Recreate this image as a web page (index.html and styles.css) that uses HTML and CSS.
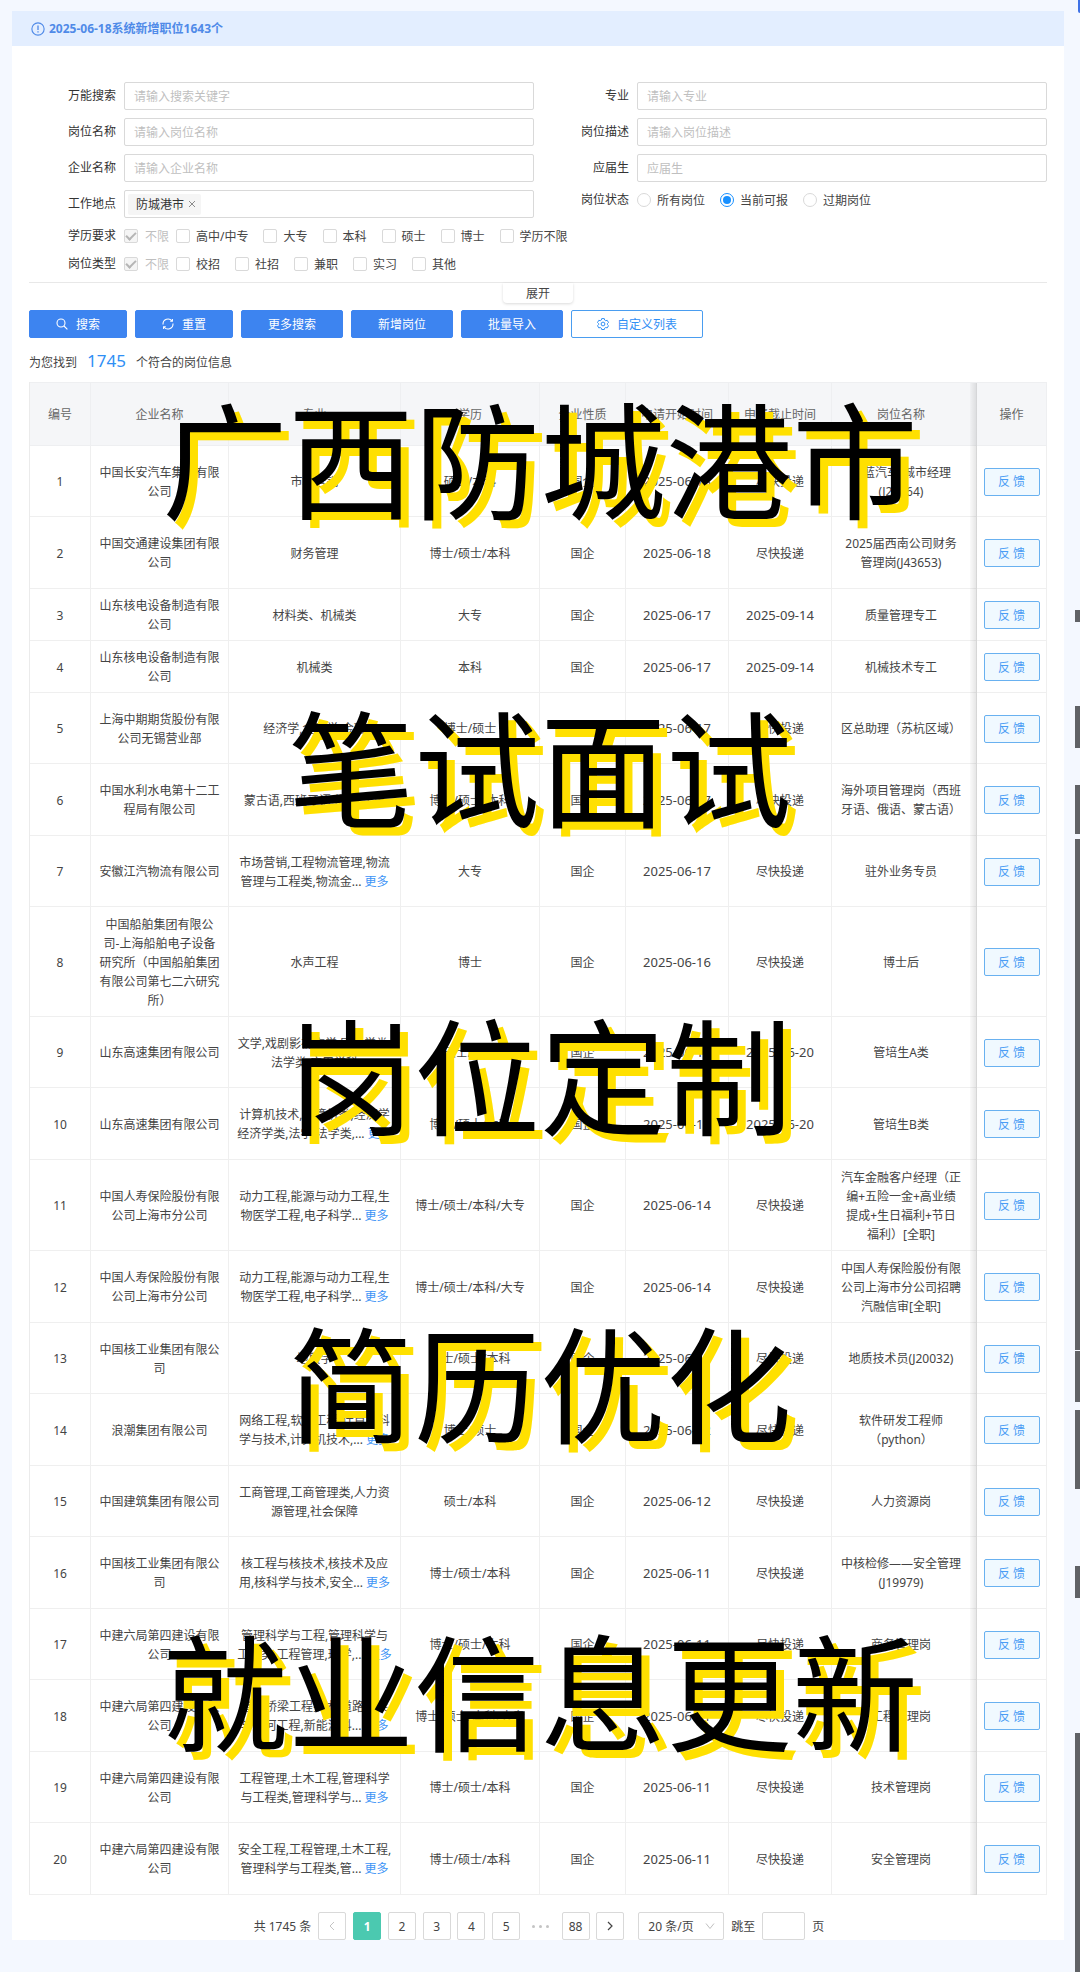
FILE: index.html
```html
<!DOCTYPE html>
<html lang="zh-CN">
<head>
<meta charset="utf-8">
<title>岗位列表</title>
<link rel="stylesheet" href="styles.css">
</head>
<body>
<main class="panel">
  <div class="notice">
    <svg class="notice-icon" viewBox="0 0 16 16" fill="none" stroke="currentColor"><circle cx="8" cy="8" r="7" stroke-width="1.3"/><path d="M8 4v5M8 10.6v1.4" stroke-width="1.5"/></svg>
    <span>2025-06-18系统新增职位1643个</span>
  </div>
  <div class="content">
    <form class="filters">
      <label for="kw">万能搜索</label><input class="field" id="kw" type="text" placeholder="请输入搜索关键字">
      <label for="major">专业</label><input class="field" id="major" type="text" placeholder="请输入专业">
      <label for="job">岗位名称</label><input class="field" id="job" type="text" placeholder="请输入岗位名称">
      <label for="desc">岗位描述</label><input class="field" id="desc" type="text" placeholder="请输入岗位描述">
      <label for="corp">企业名称</label><input class="field" id="corp" type="text" placeholder="请输入企业名称">
      <label for="grad">应届生</label><input class="field" id="grad" type="text" placeholder="应届生">
      <label for="place">工作地点</label>
      <div class="field tags">
        <span class="tag">防城港市<button type="button" class="tag-close" aria-label="移除"><svg viewBox="0 0 8 8" stroke="currentColor"><path d="M1 1l6 6M7 1l-6 6"/></svg></button></span>
        <input class="tag-input" id="place" type="text">
      </div>
      <span class="row-label">岗位状态</span>
      <div class="options status">
        <label><input type="radio" name="st">所有岗位</label>
        <label><input type="radio" name="st" checked>当前可报</label>
        <label><input type="radio" name="st">过期岗位</label>
      </div>
      <span class="row-label">学历要求</span>
      <div class="options wide">
        <label class="off"><input type="checkbox" checked disabled>不限</label>
        <label><input type="checkbox">高中/中专</label>
        <label><input type="checkbox">大专</label>
        <label><input type="checkbox">本科</label>
        <label><input type="checkbox">硕士</label>
        <label><input type="checkbox">博士</label>
        <label><input type="checkbox">学历不限</label>
      </div>
      <span class="row-label">岗位类型</span>
      <div class="options wide">
        <label class="off"><input type="checkbox" checked disabled>不限</label>
        <label><input type="checkbox">校招</label>
        <label><input type="checkbox">社招</label>
        <label><input type="checkbox">兼职</label>
        <label><input type="checkbox">实习</label>
        <label><input type="checkbox">其他</label>
      </div>
    </form>
    <div class="fold"><button type="button" class="fold-btn">展开</button></div>
    <div class="toolbar">
      <button type="button" class="btn narrow"><svg viewBox="0 0 12 12" fill="none" stroke="currentColor" stroke-width="1.1"><circle cx="5" cy="5" r="4"/><path d="M8 8l3.4 3.4"/></svg>搜索</button>
      <button type="button" class="btn narrow"><svg viewBox="0 0 12 12" fill="none" stroke="currentColor" stroke-width="1.1"><path d="M1 6.6V6a5 5 0 0 1 9-3M11 5.4V6a5 5 0 0 1-9 3"/><path d="M10.4 1v2.3H8.2M1.600 11V8.700H3.800"/></svg>重置</button>
      <button type="button" class="btn">更多搜索</button>
      <button type="button" class="btn">新增岗位</button>
      <button type="button" class="btn">批量导入</button>
      <button type="button" class="btn outline"><svg viewBox="0 0 12 12" fill="none" stroke="currentColor"><path d="M4.700.600h2.600l.4 1.500 1 .6 1.500-.4 1.300 2.200-1.100 1.100v1l1.100 1.100-1.300 2.200-1.500-.4-1 .6-.4 1.400H4.700l-.4-1.400-1-.6-1.500.4L.500 7.700l1.100-1.100v-1L.500 4.500l1.300-2.200 1.500.4 1-.6z"/><circle cx="6" cy="6" r="1.900"/></svg>自定义列表</button>
    </div>
    <p class="summary">为您找到<strong>1745</strong>个符合的岗位信息</p>
    <table class="jobs">
      <colgroup><col class="c-no"><col class="c-corp"><col class="c-major"><col class="c-edu"><col class="c-kind"><col class="c-start"><col class="c-end"><col class="c-job"><col class="c-act"></colgroup>
      <thead><tr><th>编号</th><th>企业名称</th><th>专业</th><th>学历</th><th>企业性质</th><th>申请开始时间</th><th>申请截止时间</th><th>岗位名称</th><th>操作</th></tr></thead>
      <tbody>
      <tr><td>1</td><td>中国长安汽车集团有限公司</td><td>市场营销</td><td>硕士/本科</td><td>国企</td><td class="date">2025-06-18</td><td>尽快投递</td><td>深蓝汽车-城市经理(J20164)</td><td><button type="button" class="reply">反 馈</button></td></tr>
      <tr><td>2</td><td>中国交通建设集团有限公司</td><td>财务管理</td><td>博士/硕士/本科</td><td>国企</td><td class="date">2025-06-18</td><td>尽快投递</td><td>2025届西南公司财务管理岗(J43653)</td><td><button type="button" class="reply">反 馈</button></td></tr>
      <tr class="short"><td>3</td><td>山东核电设备制造有限公司</td><td>材料类、机械类</td><td>大专</td><td>国企</td><td class="date">2025-06-17</td><td class="date">2025-09-14</td><td>质量管理专工</td><td><button type="button" class="reply">反 馈</button></td></tr>
      <tr class="short"><td>4</td><td>山东核电设备制造有限公司</td><td>机械类</td><td>本科</td><td>国企</td><td class="date">2025-06-17</td><td class="date">2025-09-14</td><td>机械技术专工</td><td><button type="button" class="reply">反 馈</button></td></tr>
      <tr><td>5</td><td>上海中期期货股份有限公司无锡营业部</td><td>经济学,金融学,金融</td><td>博士/硕士</td><td>国企</td><td class="date">2025-06-17</td><td>尽快投递</td><td>区总助理（苏杭区域）</td><td><button type="button" class="reply">反 馈</button></td></tr>
      <tr><td>6</td><td>中国水利水电第十二工程局有限公司</td><td>蒙古语,西班牙语,俄语,法语</td><td>博士/硕士/本科</td><td>国企</td><td class="date">2025-06-17</td><td>尽快投递</td><td>海外项目管理岗（西班牙语、俄语、蒙古语）</td><td><button type="button" class="reply">反 馈</button></td></tr>
      <tr><td>7</td><td>安徽江汽物流有限公司</td><td>市场营销,工程物流管理,物流<br>管理与工程类,物流金... <a href="#">更多</a></td><td>大专</td><td>国企</td><td class="date">2025-06-17</td><td>尽快投递</td><td>驻外业务专员</td><td><button type="button" class="reply">反 馈</button></td></tr>
      <tr class="five-line"><td>8</td><td>中国船舶集团有限公司-上海船舶电子设备研究所（中国船舶集团有限公司第七二六研究所）</td><td>水声工程</td><td>博士</td><td>国企</td><td class="date">2025-06-16</td><td>尽快投递</td><td>博士后</td><td><button type="button" class="reply">反 馈</button></td></tr>
      <tr><td>9</td><td>山东高速集团有限公司</td><td>文学,戏剧影视文学,历史学类,<br>法学类,应用学科</td><td>硕士/本科</td><td>国企</td><td class="date">2025-06-16</td><td class="date">2025-06-20</td><td>管培生A类</td><td><button type="button" class="reply">反 馈</button></td></tr>
      <tr><td>10</td><td>山东高速集团有限公司</td><td>计算机技术,计算机类,经济学<br>经济学类,法学,法学类,... <a href="#">更多</a></td><td>博士/硕士/本科</td><td>国企</td><td class="date">2025-06-16</td><td class="date">2025-06-20</td><td>管培生B类</td><td><button type="button" class="reply">反 馈</button></td></tr>
      <tr class="four-line"><td>11</td><td>中国人寿保险股份有限公司上海市分公司</td><td>动力工程,能源与动力工程,生<br>物医学工程,电子科学... <a href="#">更多</a></td><td>博士/硕士/本科/大专</td><td>国企</td><td class="date">2025-06-14</td><td>尽快投递</td><td>汽车金融客户经理（正编+五险一金+高业绩提成+生日福利+节日福利）[全职]</td><td><button type="button" class="reply">反 馈</button></td></tr>
      <tr><td>12</td><td>中国人寿保险股份有限公司上海市分公司</td><td>动力工程,能源与动力工程,生<br>物医学工程,电子科学... <a href="#">更多</a></td><td>博士/硕士/本科/大专</td><td>国企</td><td class="date">2025-06-14</td><td>尽快投递</td><td>中国人寿保险股份有限公司上海市分公司招聘汽融信审[全职]</td><td><button type="button" class="reply">反 馈</button></td></tr>
      <tr><td>13</td><td>中国核工业集团有限公司</td><td>地质学</td><td>博士/硕士/本科</td><td>国企</td><td class="date">2025-06-13</td><td>尽快投递</td><td>地质技术员(J20032)</td><td><button type="button" class="reply">反 馈</button></td></tr>
      <tr><td>14</td><td>浪潮集团有限公司</td><td>网络工程,软件工程,计算机科<br>学与技术,计算机技术,... <a href="#">更多</a></td><td>博士/硕士</td><td>国企</td><td class="date">2025-06-12</td><td>尽快投递</td><td>软件研发工程师（python）</td><td><button type="button" class="reply">反 馈</button></td></tr>
      <tr><td>15</td><td>中国建筑集团有限公司</td><td>工商管理,工商管理类,人力资<br>源管理,社会保障</td><td>硕士/本科</td><td>国企</td><td class="date">2025-06-12</td><td>尽快投递</td><td>人力资源岗</td><td><button type="button" class="reply">反 馈</button></td></tr>
      <tr><td>16</td><td>中国核工业集团有限公司</td><td>核工程与核技术,核技术及应<br>用,核科学与技术,安全... <a href="#">更多</a></td><td>博士/硕士/本科</td><td>国企</td><td class="date">2025-06-11</td><td>尽快投递</td><td>中核检修——安全管理(J19979)</td><td><button type="button" class="reply">反 馈</button></td></tr>
      <tr><td>17</td><td>中建六局第四建设有限公司</td><td>管理科学与工程,管理科学与<br>工程类,工程管理,理学,... <a href="#">更多</a></td><td>博士/硕士/本科</td><td>国企</td><td class="date">2025-06-11</td><td>尽快投递</td><td>商务管理岗</td><td><button type="button" class="reply">反 馈</button></td></tr>
      <tr><td>18</td><td>中建六局第四建设有限公司</td><td>道路桥梁工程技术,道路桥梁<br>与渡河工程,新能源科... <a href="#">更多</a></td><td>博士/硕士/本科/大专</td><td>国企</td><td class="date">2025-06-11</td><td>尽快投递</td><td>工程管理岗</td><td><button type="button" class="reply">反 馈</button></td></tr>
      <tr><td>19</td><td>中建六局第四建设有限公司</td><td>工程管理,土木工程,管理科学<br>与工程类,管理科学与... <a href="#">更多</a></td><td>博士/硕士/本科</td><td>国企</td><td class="date">2025-06-11</td><td>尽快投递</td><td>技术管理岗</td><td><button type="button" class="reply">反 馈</button></td></tr>
      <tr><td>20</td><td>中建六局第四建设有限公司</td><td>安全工程,工程管理,土木工程,<br>管理科学与工程类,管... <a href="#">更多</a></td><td>博士/硕士/本科</td><td>国企</td><td class="date">2025-06-11</td><td>尽快投递</td><td>安全管理岗</td><td><button type="button" class="reply">反 馈</button></td></tr>
      </tbody>
    </table>
    <nav class="pager">
      <span>共 1745 条</span>
      <div class="pages">
        <button type="button" class="page muted" disabled aria-label="上一页"><svg viewBox="0 0 10 10" fill="none" stroke="currentColor"><path d="M7 1L3 5l4 4"/></svg></button>
        <button type="button" class="page current">1</button>
        <button type="button" class="page">2</button>
        <button type="button" class="page">3</button>
        <button type="button" class="page">4</button>
        <button type="button" class="page">5</button>
        <span class="dots"><i></i><i></i><i></i></span>
        <button type="button" class="page">88</button>
        <button type="button" class="page" aria-label="下一页"><svg viewBox="0 0 10 10" fill="none" stroke="currentColor" stroke-width="1.2"><path d="M3 1l4 4-4 4"/></svg></button>
      </div>
      <div class="size">
        <select aria-label="每页条数"><option>20 条/页</option></select>
        <svg viewBox="0 0 10 10" fill="none" stroke="currentColor"><path d="M1 2.500L5 7.500l4-5"/></svg>
      </div>
      <label for="jump">跳至</label><input class="jump" id="jump" type="text"><span>页</span>
    </nav>
  </div>
</main>
<div class="banner">
  <div>广西防城港市</div>
  <div>笔试面试</div>
  <div>岗位定制</div>
  <div>简历优化</div>
  <div>就业信息更新</div>
</div>
<div class="edge edge-blue"></div>
<div class="edge edge-a"></div>
<div class="edge edge-b"></div>
<div class="edge edge-c"></div>
<div class="edge edge-d"></div>
<div class="edge edge-e"></div>
<div class="edge edge-f"></div>
<div class="edge edge-g"></div>
<div class="edge edge-h"></div>
</body>
</html>
```

FILE: styles.css
```css
* { box-sizing: border-box; }
body {
  margin: 0;
  padding: 11px 16px 32px 12px;
  position: relative;
  overflow-x: hidden;
  background: #f4f8ff;
  color: #444;
  font: 12px/19px "Noto Sans", "Noto Sans CJK SC", sans-serif;
}
button, input, select { font: inherit; color: inherit; margin: 0; }
button { cursor: pointer; padding: 0; }
a { color: #3d94f6; text-decoration: none; }

.panel { background: #fff; }
.notice {
  display: flex;
  align-items: center;
  gap: 4px;
  height: 35px;
  padding-left: 19px;
  background: #e3eeff;
  color: #4f8ae8;
  font-weight: 700;
}
.notice-icon { width: 14px; height: 14px; }
.content { padding: 36px 17px 0; }

/* filters */
.filters {
  display: grid;
  grid-template-columns: 95px 1fr 103px 1fr;
  row-gap: 8px;
  align-items: center;
  color: #333;
}
.filters > label, .row-label { text-align: right; padding-right: 8px; line-height: 20px; }
.field {
  width: 100%;
  height: 28px;
  padding: 0 9px;
  border: 1px solid #d9d9d9;
  border-radius: 2px;
  background: #fff;
  outline: 0;
}
.field::placeholder { color: #bfbfbf; }
.tags { display: flex; align-items: center; padding: 0 3px; }
.tag {
  display: flex;
  align-items: center;
  gap: 4px;
  height: 21px;
  padding: 0 5px 0 8px;
  background: #f5f5f5;
  border-radius: 2px;
}
.tag-close { display: flex; width: 8px; height: 8px; border: 0; background: none; color: #8c8c8c; }
.tag-input { flex: 1; min-width: 0; border: 0; outline: 0; background: none; }
.options { display: flex; align-items: center; gap: 15px; height: 20px; color: #444; }
.options label { display: flex; align-items: center; gap: 6px; }
.options .off { color: #bfbfbf; margin-right: -8px; gap: 7px; }
.status { align-self: start; }
.filters .row-label:has(+ .status) { align-self: start; }
.wide { grid-column: 2 / -1; }
.options input {
  appearance: none;
  display: grid;
  place-items: center;
  width: 14px;
  height: 14px;
  border: 1px solid #d9d9d9;
  border-radius: 2px;
  background: #fff;
}
.options input:disabled { background: #f5f5f5; }
.options input[type="checkbox"]:checked::after {
  content: "";
  width: 4px;
  height: 8px;
  margin-bottom: 2px;
  border: solid #b5b5b5;
  border-width: 0 2px 2px 0;
  transform: rotate(45deg);
}
.options input[type="radio"] { border-radius: 50%; }
.options input[type="radio"]:checked { border-color: #1890ff; }
.options input[type="radio"]:checked::after {
  content: "";
  width: 8px;
  height: 8px;
  border-radius: 50%;
  background: #1890ff;
}

.fold { display: flex; justify-content: center; margin-top: 8px; border-top: 1px solid #e8e8e8; }
.fold-btn {
  width: 70px;
  height: 20px;
  border: 0;
  border-radius: 0 0 4px 4px;
  background: #fff;
  box-shadow: 0 1px 3px rgba(0, 0, 0, .15);
}

.toolbar { display: flex; gap: 8px; margin-top: 7px; }
.btn {
  display: flex;
  align-items: center;
  justify-content: center;
  gap: 8px;
  width: 102px;
  height: 28px;
  border: 1px solid #3d84f0;
  border-radius: 2px;
  background: #3d84f0;
  color: #fff;
}
.btn svg { width: 12px; height: 12px; }
.narrow { width: 98px; }
.outline { width: 132px; border-color: #4a9df0; background: #fff; color: #2f8ff5; }

.summary { margin: 0; padding: 11px 0 9px; line-height: 24px; height: 44px; color: #444; }
.summary strong { margin: 0 10px; color: #2f8ff5; font-size: 17px; font-weight: 400; }

/* job table */
.jobs {
  width: 100%;
  table-layout: fixed;
  border-collapse: separate;
  border-spacing: 0;
  border-left: 1px solid #ebebeb;
  text-align: center;
}
.c-no { width: 61px; }
.c-corp { width: 138px; }
.c-major { width: 172px; }
.c-edu { width: 139px; }
.c-kind { width: 86px; }
.c-start { width: 103px; }
.c-end { width: 103px; }
.c-job { width: 145px; }
.c-act { width: 70px; }
.jobs th {
  height: 64px;
  padding: 0;
  border: solid #eeeff1;
  border-width: 1px 1px 1px 0;
  background: #f5f6f8;
  color: #666;
  font-weight: 400;
}
.jobs td {
  padding: 7px 8px 6px;
  border: solid #efefef;
  border-width: 0 1px 1px 0;
}
.jobs tbody tr { height: 71px; }
.jobs tbody tr:nth-child(even) { height: 72px; }
.jobs tbody tr.short { height: 52px; }
.jobs tbody tr.four-line { height: 91px; }
.jobs tbody tr.five-line { height: 110px; }
.jobs th:nth-child(8) { padding-right: 6px; }
.jobs td:nth-child(8) { padding-left: 9px; padding-right: 15px; }
.jobs th:last-child, .jobs td:last-child { position: relative; padding-left: 0; padding-right: 0; }
.jobs th:last-child::before, .jobs td:last-child::before {
  content: "";
  position: absolute;
  left: -7px;
  top: 0;
  bottom: -1px;
  width: 7px;
  background: linear-gradient(to right, rgba(0, 0, 0, .02), rgba(0, 0, 0, .11));
}
.date { font-size: 13px; }
.reply {
  display: block;
  width: 56px;
  height: 28px;
  margin: 0 auto;
  border: 1px solid #69b1f0;
  border-radius: 2px;
  background: #f0f9ff;
  color: #4a9df5;
}

/* pagination */
.pager { display: flex; justify-content: center; align-items: center; gap: 7px; padding: 17px 0 0 2px; }
.pages { display: flex; justify-content: space-between; align-items: center; width: 306px; margin-right: 7px; }
.page {
  display: flex;
  align-items: center;
  justify-content: center;
  width: 28px;
  height: 28px;
  border: 1px solid #d9d9d9;
  border-radius: 2px;
  background: #fff;
}
.page svg { width: 10px; height: 10px; }
.muted { color: #c4c4c4; }
.current { border-color: #4bc9b0; background: #4bc9b0; color: #fff; font-weight: 700; }
.dots { display: flex; justify-content: center; gap: 4px; width: 28px; }
.dots i { width: 3px; height: 3px; border-radius: 50%; background: #c4c4c4; }
.size { position: relative; }
.size select {
  appearance: none;
  display: block;
  width: 86px;
  height: 28px;
  padding: 0 9px;
  border: 1px solid #d9d9d9;
  border-radius: 2px;
  background: #fff;
}
.size svg { position: absolute; right: 9px; top: 9px; width: 10px; height: 10px; color: #bfbfbf; pointer-events: none; }
.jump { width: 43px; height: 28px; padding: 0 4px; border: 1px solid #d9d9d9; border-radius: 2px; background: #fff; }

/* headline overlay */
.banner {
  position: absolute;
  top: 301px;
  left: 0;
  right: 0;
  color: #000;
  font: 400 126px/308px "Noto Sans CJK SC", sans-serif;
  text-align: center;
  text-shadow: 8px 8px 0 #ffe000;
  white-space: nowrap;
  pointer-events: none;
}

/* slivers of the window behind, along the right edge */
.edge { position: absolute; right: 0; width: 5px; background: #606266; }
.edge-blue { top: 0; width: 2px; height: 13px; background: #3f72e6; border-radius: 0 0 0 2px; }
.edge-a { top: 610px; height: 12px; }
.edge-b { top: 706px; height: 42px; }
.edge-c { top: 785px; height: 49px; }
.edge-d { top: 839px; height: 511px; }
.edge-e { top: 1351px; height: 51px; }
.edge-f { top: 1410px; height: 79px; }
.edge-g { top: 1566px; height: 32px; }
.edge-h { top: 1733px; bottom: 0; }
```
